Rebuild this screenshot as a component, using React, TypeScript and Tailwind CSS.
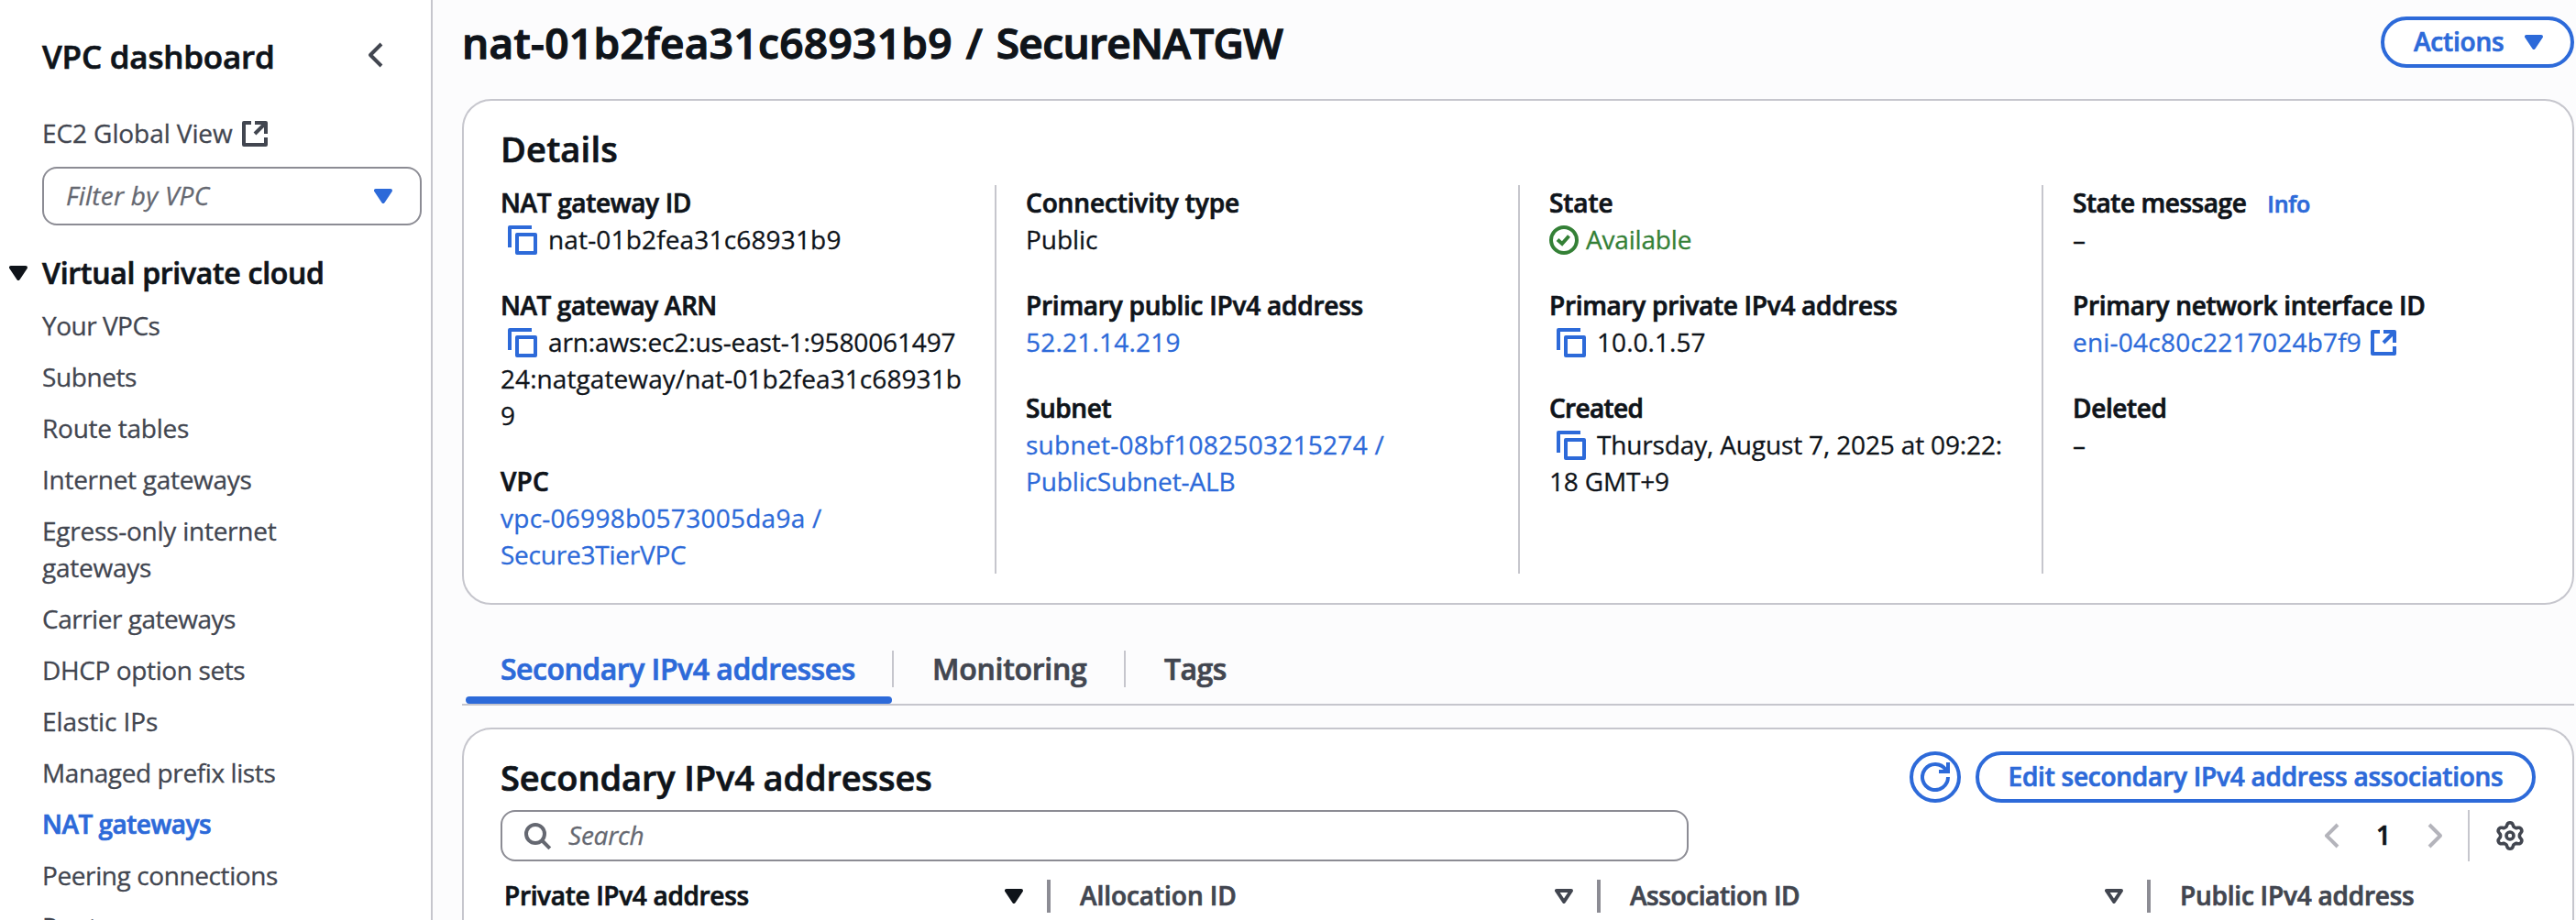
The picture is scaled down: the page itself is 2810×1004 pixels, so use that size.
import type { ReactNode } from 'react';

const BLUE = 'text-[#2d6ad9]';
const BOLD = 'font-semibold [-webkit-text-stroke:0.7px]';

function CopyIcon() {
  return (
    <svg viewBox="0 0 32 32" fill="none" stroke="currentColor" strokeWidth="4" strokeLinejoin="round" className="mr-3 ml-2 inline-block h-8 w-8 align-[-6px] text-[#2d6ad9]">
      <path d="M2 24V2h24" />
      <path d="M10 10h20v20H10z" />
    </svg>
  );
}

function ExternalIcon() {
  return (
    <svg viewBox="0 0 32 32" fill="none" stroke="currentColor" strokeWidth="4" strokeLinejoin="round" className="ml-2 inline-block h-8 w-8 align-[-6px]">
      <path d="M12 4H4v24h24v-8" />
      <path d="M16 4h12v12M28 4 16 16" />
    </svg>
  );
}

function Caret({ className = '', hollow = false }: { className?: string; hollow?: boolean }) {
  return (
    <svg viewBox="0 0 20 16" className={`h-4 w-5 shrink-0 ${className}`} stroke="currentColor" strokeLinejoin="round">
      {hollow ? (
        <path d="M2 2h16l-8 12z" fill="none" strokeWidth="4" />
      ) : (
        <path d="M2 2h16l-8 12z" fill="currentColor" strokeWidth="4" />
      )}
    </svg>
  );
}

function Chevron({ className = '', right = false }: { className?: string; right?: boolean }) {
  return (
    <svg viewBox="0 0 32 32" fill="none" stroke="currentColor" strokeWidth="4" strokeLinejoin="round" className={`h-8 w-8 shrink-0 ${className}`}>
      {right ? <path d="m10 4 12 12-12 12" /> : <path d="M22 4 10 16l12 12" />}
    </svg>
  );
}

function CheckIcon() {
  return (
    <svg viewBox="0 0 32 32" fill="none" stroke="currentColor" strokeWidth="4" className="mr-2 inline-block h-8 w-8 align-[-6px]">
      <circle cx="16" cy="16" r="14" />
      <path d="m9 15.500 5 4.500 7.500-8.500" />
    </svg>
  );
}

function RefreshIcon() {
  return (
    <svg viewBox="0 0 32 32" fill="none" stroke="currentColor" strokeWidth="4" className="h-8 w-8">
      <path d="M30 16A14 14 0 1 1 27.600 8.200" />
      <path d="M30 0v10H20" />
    </svg>
  );
}

function SearchIcon() {
  return (
    <svg viewBox="0 0 32 32" fill="none" stroke="currentColor" strokeWidth="4" className="h-8 w-8">
      <circle cx="14" cy="14" r="10" />
      <path d="m21 21 8.800 8.800" />
    </svg>
  );
}

// Six-lobed outline, sampled every five degrees
const GEAR = Array.from({ length: 72 }, (_, i) => {
  const a = (i * 5 * Math.PI) / 180;
  const c = Math.cos(6 * a);
  const r = 12.3 + (1.9 * Math.tanh(1.6 * c)) / Math.tanh(1.6);
  return `${(16 + r * Math.sin(a)).toFixed(2)} ${(16 - r * Math.cos(a)).toFixed(2)}`;
}).join('L');

function GearIcon() {
  return (
    <svg viewBox="0 0 32 32" fill="none" stroke="currentColor" strokeWidth="3.600" strokeLinejoin="round" className="h-8 w-8 text-[#424650]">
      <path d={`M${GEAR}Z`} />
      <circle cx="16" cy="16" r="4" />
    </svg>
  );
}

function Line({ children, className = '' }: { children: ReactNode; className?: string }) {
  return <div className={`h-10 leading-[38px] whitespace-nowrap ${className}`}>{children}</div>;
}

function Field({ label, track, children }: { label: ReactNode; track: string; children: ReactNode }) {
  return (
    <div>
      <Line className={`${BOLD} ${track}`}>{label}</Line>
      {children}
    </div>
  );
}

const NAV: { lines: string[]; track: string; active?: boolean }[] = [
  { lines: ['Your VPCs'], track: 'tracking-[-0.5px]' },
  { lines: ['Subnets'], track: 'tracking-[-0.42px]' },
  { lines: ['Route tables'], track: 'tracking-[-0.25px]' },
  { lines: ['Internet gateways'], track: 'tracking-[-0.28px]' },
  { lines: ['Egress-only internet', 'gateways'], track: 'tracking-[-0.24px]' },
  { lines: ['Carrier gateways'], track: 'tracking-[-0.49px]' },
  { lines: ['DHCP option sets'], track: 'tracking-[-0.38px]' },
  { lines: ['Elastic IPs'], track: 'tracking-[-0.09px]' },
  { lines: ['Managed prefix lists'], track: 'tracking-[-0.4px]' },
  { lines: ['NAT gateways'], track: 'tracking-[-0.5px]', active: true },
  { lines: ['Peering connections'], track: 'tracking-[-0.4px]' },
  { lines: ['Route servers'], track: 'tracking-[-0.3px]' },
];

const COLUMNS = [
  { name: 'Private IPv4 address', cls: 'pl-1 tracking-[-0.33px] text-[#0f141a]', sorted: true },
  { name: 'Allocation ID', cls: 'pl-8 tracking-[-0.05px]' },
  { name: 'Association ID', cls: 'pl-8 tracking-[-0.41px]' },
];

function Sidebar() {
  return (
    <aside className="h-full w-[472px] shrink-0 border-r-2 border-[#c6c6cd] bg-white pt-9 text-[#424650]">
      <div className="flex h-12 items-center justify-between pr-11 pl-[46px]">
        <h2 className={`pt-[3px] text-[35px] leading-[48px] tracking-[-0.21px] text-[#0f141a] ${BOLD}`}>VPC dashboard</h2>
        <Chevron />
      </div>
      <Line className="mt-[42px] pl-[46px] tracking-[-0.09px]">
        EC2 Global View
        <ExternalIcon />
      </Line>
      <div className="mt-4 ml-[46px] flex h-16 w-[414px] items-center justify-between rounded-2xl border-2 border-[#8c8c94] pr-[30px] pl-6">
        <Line className="text-[#656871] italic tracking-[0.26px]">Filter by VPC</Line>
        <Caret className={BLUE} />
      </div>
      <div className="mt-[30px] flex h-11 items-center gap-4 pl-[10px] text-[#0f141a]">
        <Caret />
        <h3 className={`pb-px text-[32px] leading-[43px] tracking-[-0.29px] ${BOLD}`}>Virtual private cloud</h3>
      </div>
      <nav className="mt-4 flex flex-col gap-4 pl-[46px]">
        {NAV.map((item) => (
          <a key={item.lines[0]} className={`${item.track} ${item.active ? `text-[#2d6ad9] ${BOLD}` : ''}`}>
            {item.lines.map((l) => (
              <Line key={l}>{l}</Line>
            ))}
          </a>
        ))}
      </nav>
    </aside>
  );
}

function Details() {
  const col = 'flex w-[571px] shrink-0 flex-col gap-8 border-l-2 border-[#c6c6cd] pl-8 last:w-[539px]';
  return (
    <section className="h-[552px] rounded-[32px] border-2 border-[#c6c6cd] bg-white px-10 pt-7">
      <h2 className={`text-[38px] leading-[48px] tracking-[0.2px] ${BOLD}`}>Details</h2>
      <div className="mt-4 flex h-[424px]">
        <div className="flex w-[539px] shrink-0 flex-col gap-8">
          <Field label="NAT gateway ID" track="tracking-[-0.35px]">
            <Line className="tracking-[0.16px]"><CopyIcon />nat-01b2fea31c68931b9</Line>
          </Field>
          <Field label="NAT gateway ARN" track="tracking-[-0.42px]">
            <Line className="tracking-[-0.13px]"><CopyIcon />arn:aws:ec2:us-east-1:9580061497</Line>
            <Line className="tracking-[0.08px]">24:natgateway/nat-01b2fea31c68931b</Line>
            <Line>9</Line>
          </Field>
          <Field label="VPC" track="tracking-[0.17px]">
            <Line className={`tracking-[0.26px] ${BLUE}`}>vpc-06998b0573005da9a /</Line>
            <Line className={`tracking-[-0.23px] ${BLUE}`}>Secure3TierVPC</Line>
          </Field>
        </div>
        <div className={col}>
          <Field label="Connectivity type" track="tracking-[-0.12px]">
            <Line className="tracking-[-0.06px]">Public</Line>
          </Field>
          <Field label="Primary public IPv4 address" track="tracking-[-0.24px]">
            <Line className={`tracking-[0.21px] ${BLUE}`}>52.21.14.219</Line>
          </Field>
          <Field label="Subnet" track="tracking-[-0.43px]">
            <Line className={`tracking-[0.28px] ${BLUE}`}>subnet-08bf1082503215274 /</Line>
            <Line className={`tracking-[-0.14px] ${BLUE}`}>PublicSubnet-ALB</Line>
          </Field>
        </div>
        <div className={col}>
          <Field label="State" track="tracking-[-0.1px]">
            <Line className="tracking-[-0.18px] text-[#348036]"><CheckIcon />Available</Line>
          </Field>
          <Field label="Primary private IPv4 address" track="tracking-[-0.3px]">
            <Line className="tracking-[0.06px]"><CopyIcon />10.0.1.57</Line>
          </Field>
          <Field label="Created" track="tracking-[-0.67px]">
            <Line className="tracking-[-0.15px]"><CopyIcon />Thursday, August 7, 2025 at 09:22:</Line>
            <Line className="tracking-[-0.18px]">18 GMT+9</Line>
          </Field>
        </div>
        <div className={col}>
          <Field
            label={<>State message<span className={`ml-[23px] text-[25px] tracking-[-0.3px] ${BLUE}`}>Info</span></>}
            track="tracking-[-0.45px]"
          >
            <Line>–</Line>
          </Field>
          <Field label="Primary network interface ID" track="tracking-[-0.28px]">
            <Line className={`tracking-[0.22px] ${BLUE}`}>eni-04c80c2217024b7f9<ExternalIcon /></Line>
          </Field>
          <Field label="Deleted" track="tracking-[-0.37px]">
            <Line>–</Line>
          </Field>
        </div>
      </div>
    </section>
  );
}

function Tabs() {
  return (
    <div className="mt-[50px] border-b-2 border-[#c6c6cd]">
      <div className={`flex h-10 text-[32px] leading-[39px] text-[#424650] ${BOLD}`}>
        <div className={`w-[469px] pl-[42px] tracking-[-0.49px] ${BLUE}`}>Secondary IPv4 addresses</div>
        <div className="w-[253px] border-l-2 border-[#c6c6cd] pl-[42px] tracking-[-0.28px]">Monitoring</div>
        <div className="border-l-2 border-[#c6c6cd] pl-[42px] tracking-[-0.56px]">Tags</div>
      </div>
      <div className="mt-[10px] ml-1 h-2 w-[465px] rounded-[4px] bg-[#2d6ad9]" />
    </div>
  );
}

function Addresses() {
  return (
    <section className="mt-6 h-[300px] rounded-t-[32px] border-2 border-b-0 border-[#c6c6cd] bg-white px-10 pt-6">
      <div className="flex h-14 justify-between">
        <h2 className={`text-[38px] leading-[56px] tracking-[-0.11px] ${BOLD}`}>Secondary IPv4 addresses</h2>
        <div className={`flex gap-4 ${BLUE}`}>
          <button className="flex h-14 w-14 items-center justify-center rounded-full border-4 border-current">
            <RefreshIcon />
          </button>
          <button className="flex h-14 w-[611px] items-center justify-center rounded-full border-4 border-current">
            <Line className={`tracking-[-0.24px] ${BOLD}`}>Edit secondary IPv4 address associations</Line>
          </button>
        </div>
      </div>
      <div className="mt-2 flex h-14 items-center justify-between">
        <div className="flex h-14 w-[1296px] items-center gap-[18px] rounded-2xl border-2 border-[#8c8c94] pl-[22px] text-[#656871]">
          <SearchIcon />
          <Line className="italic tracking-[-0.23px]">Search</Line>
        </div>
        <div className="flex h-14 items-center pr-3">
          <Chevron className="text-[#b4b4bb]" />
          <Line className={`w-20 text-center ${BOLD}`}>1</Line>
          <Chevron right className="text-[#b4b4bb]" />
          <div className="mr-7 ml-5 h-14 w-0.5 bg-[#c6c6cd]" />
          <GearIcon />
        </div>
      </div>
      <div className={`mt-5 flex h-9 leading-[34px] whitespace-nowrap text-[#424650] ${BOLD}`}>
        {COLUMNS.map((c) => (
          <div key={c.name} className={`flex w-[600px] shrink-0 justify-between border-r-4 border-[#8c8c94] pr-[26px] ${c.cls}`}>
            {c.name}
            <Caret className="mt-[10px]" hollow={!c.sorted} />
          </div>
        ))}
        <div className="pl-8 tracking-[-0.23px]">Public IPv4 address</div>
      </div>
    </section>
  );
}

export default function App() {
  return (
    <div className="flex h-[1004px] w-[2810px] overflow-hidden bg-[#fcfcfd] font-['Open_Sans','Noto_Sans',sans-serif] text-[28px] text-[#0f141a] [-webkit-text-stroke:0.3px]">
      <Sidebar />
      <main className="min-w-0 flex-1 pt-[18px] pr-0.5 pl-8">
        <header className="mb-[34px] flex h-14 items-center justify-between">
          <h1 className="text-[46px] leading-[56px] font-semibold whitespace-nowrap tracking-[0.32px] [word-spacing:2.5px] [-webkit-text-stroke:1.3px]">
            nat-01b2fea31c68931b9 / <span className="tracking-[-0.65px]">SecureNATGW</span>
          </h1>
          <button className={`flex h-14 w-[211px] items-center justify-between rounded-full border-4 border-current bg-white pr-[30px] pl-8 ${BLUE}`}>
            <Line className={`tracking-[-0.2px] ${BOLD}`}>Actions</Line>
            <Caret />
          </button>
        </header>
        <Details />
        <Tabs />
        <Addresses />
      </main>
    </div>
  );
}
